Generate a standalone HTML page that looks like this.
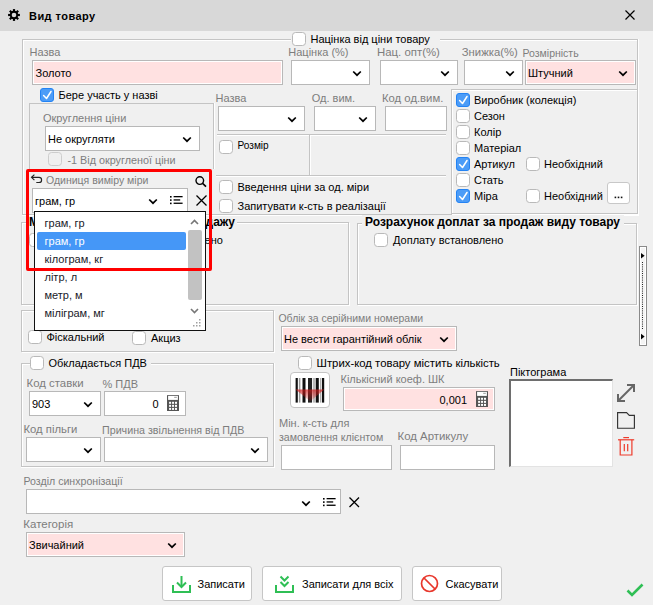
<!DOCTYPE html><html><head><meta charset="utf-8"><style>
html,body{margin:0;padding:0}
body{width:653px;height:605px;position:relative;overflow:hidden;background:#f0f0f0;font-family:"Liberation Sans",sans-serif;font-size:11px}
.t{position:absolute;white-space:nowrap}
svg{overflow:visible}
</style></head><body>
<div style="position:absolute;left:0px;top:0px;width:653px;height:31px;background:#d8d8d8"></div>
<svg style="position:absolute;left:8px;top:9px" width="12" height="12" viewBox="0 0 12 12"><g fill="#000"><circle cx="6" cy="6" r="4.2"/><rect x="4.9" y="0.1" width="2.2" height="11.8" transform="rotate(0 6 6)"/><rect x="4.9" y="0.1" width="2.2" height="11.8" transform="rotate(45 6 6)"/><rect x="4.9" y="0.1" width="2.2" height="11.8" transform="rotate(90 6 6)"/><rect x="4.9" y="0.1" width="2.2" height="11.8" transform="rotate(135 6 6)"/></g><circle cx="6" cy="6" r="2.3" fill="#d9d9d9"/></svg>
<div class="t" style="left:29px;top:10.69px;font-size:11px;line-height:11px;color:#000;font-weight:bold;letter-spacing:0.45px">Вид товару</div>
<svg style="position:absolute;left:625px;top:10px" width="10" height="10" viewBox="0 0 10 10"><path d="M0.5 0.5 L9.5 9.5 M9.5 0.5 L0.5 9.5" stroke="#000" stroke-width="1.2" fill="none"/></svg>
<div style="position:absolute;left:22px;top:39px;width:269px;height:1px;background:#c4c4c4"></div>
<div style="position:absolute;left:22px;top:40px;width:269px;height:1px;background:#fff"></div>
<div style="position:absolute;left:440px;top:39px;width:198px;height:1px;background:#c4c4c4"></div>
<div style="position:absolute;left:440px;top:40px;width:198px;height:1px;background:#fff"></div>
<div style="position:absolute;left:22px;top:39px;width:1px;height:176px;background:#c4c4c4"></div>
<div style="position:absolute;left:23px;top:40px;width:1px;height:175px;background:#fff"></div>
<div style="position:absolute;left:637px;top:39px;width:1px;height:176px;background:#c4c4c4"></div>
<div style="position:absolute;left:638px;top:39px;width:1px;height:176px;background:#fff"></div>
<div style="position:absolute;left:22px;top:214px;width:616px;height:1px;background:#c4c4c4"></div>
<div style="position:absolute;left:22px;top:215px;width:617px;height:1px;background:#fff"></div>
<div style="position:absolute;left:292px;top:32px;width:14px;height:14px;border:1.5px solid #b9b9b9;border-radius:3.5px;background:#fff;box-sizing:border-box"></div>
<div class="t" style="left:310.5px;top:33.69px;font-size:11px;line-height:11px;color:#000;font-weight:normal;">Націнка від ціни товару</div>
<div class="t" style="left:29.5px;top:46.69px;font-size:11px;line-height:11px;color:#7d7d7d;font-weight:normal;">Назва</div>
<div style="position:absolute;left:32px;top:60px;width:251px;height:25px;background:#ffe1e1;border:1px solid #b8b8b8;box-shadow:inset 0 0 0 1px #fff;box-sizing:border-box"></div>
<div class="t" style="left:35.5px;top:67.69px;font-size:11px;line-height:11px;color:#000;font-weight:normal;">Золото</div>
<div class="t" style="left:288.3px;top:47.49px;font-size:11px;line-height:11px;color:#7d7d7d;font-weight:normal;">Націнка (%)</div>
<div style="position:absolute;left:291px;top:60px;width:79px;height:25px;background:#fff;border:1px solid #b8b8b8;box-shadow:inset 0 0 0 1px #fff;box-sizing:border-box"></div>
<svg style="position:absolute;left:352px;top:70px" width="10" height="7" viewBox="0 0 10 7"><path d="M1.2 1.5 L5 5.2 L8.8 1.5" fill="none" stroke="#000" stroke-width="1.7"/></svg>
<div class="t" style="left:377px;top:47.15px;font-size:11.4px;line-height:11.4px;color:#7d7d7d;font-weight:normal;">Нац. опт(%)</div>
<div style="position:absolute;left:380px;top:60px;width:78px;height:25px;background:#fff;border:1px solid #b8b8b8;box-shadow:inset 0 0 0 1px #fff;box-sizing:border-box"></div>
<svg style="position:absolute;left:440px;top:70px" width="10" height="7" viewBox="0 0 10 7"><path d="M1.2 1.5 L5 5.2 L8.8 1.5" fill="none" stroke="#000" stroke-width="1.7"/></svg>
<div class="t" style="left:461.8px;top:47.23px;font-size:11.3px;line-height:11.3px;color:#7d7d7d;font-weight:normal;">Знижка(%)</div>
<div style="position:absolute;left:464px;top:60px;width:59px;height:25px;background:#fff;border:1px solid #b8b8b8;box-shadow:inset 0 0 0 1px #fff;box-sizing:border-box"></div>
<svg style="position:absolute;left:505px;top:70px" width="10" height="7" viewBox="0 0 10 7"><path d="M1.2 1.5 L5 5.2 L8.8 1.5" fill="none" stroke="#000" stroke-width="1.7"/></svg>
<div class="t" style="left:522.5px;top:47.91px;font-size:10.5px;line-height:10.5px;color:#7d7d7d;font-weight:normal;">Розмірність</div>
<div style="position:absolute;left:525px;top:60px;width:111px;height:25px;background:#ffe1e1;border:1px solid #b8b8b8;box-shadow:inset 0 0 0 1px #fff;box-sizing:border-box"></div>
<svg style="position:absolute;left:618px;top:70px" width="10" height="7" viewBox="0 0 10 7"><path d="M1.2 1.5 L5 5.2 L8.8 1.5" fill="none" stroke="#000" stroke-width="1.7"/></svg>
<div class="t" style="left:528px;top:68.09px;font-size:11px;line-height:11px;color:#000;font-weight:normal;">Штучний</div>
<div style="position:absolute;left:40px;top:88px;width:14px;height:14px;background:#4c9cf7;border:1px solid #2383f4;box-sizing:border-box;border-radius:3px"><svg width="14" height="14" viewBox="0 0 14 14" style="position:absolute;left:-1px;top:-1px"><path d="M3.6 7.5 L6.5 10.5 L11 3.5" fill="none" stroke="#fff" stroke-width="1.5" stroke-linecap="round" stroke-linejoin="round"/></svg></div>
<div class="t" style="left:58.5px;top:89.99px;font-size:11px;line-height:11px;color:#000;font-weight:normal;">Бере участь у назві</div>
<div style="position:absolute;left:29px;top:103px;width:1px;height:66px;background:#c4c4c4"></div>
<div style="position:absolute;left:29px;top:103px;width:185px;height:1px;background:#c4c4c4"></div>
<div style="position:absolute;left:213px;top:103px;width:1px;height:66px;background:#c4c4c4"></div>
<div style="position:absolute;left:214px;top:103px;width:1px;height:66px;background:#fff"></div>
<div class="t" style="left:43px;top:112.69px;font-size:11px;line-height:11px;color:#7d7d7d;font-weight:normal;">Округлення ціни</div>
<div style="position:absolute;left:45px;top:126px;width:155px;height:25px;background:#fff;border:1px solid #b8b8b8;box-shadow:inset 0 0 0 1px #fff;box-sizing:border-box"></div>
<svg style="position:absolute;left:182px;top:136px" width="10" height="7" viewBox="0 0 10 7"><path d="M1.2 1.5 L5 5.2 L8.8 1.5" fill="none" stroke="#000" stroke-width="1.7"/></svg>
<div class="t" style="left:48px;top:134.09px;font-size:11px;line-height:11px;color:#000;font-weight:normal;">Не округляти</div>
<div style="position:absolute;left:48px;top:152px;width:14px;height:14px;border:1.5px solid #cdcdcd;border-radius:3.5px;background:#f0f0f0;box-sizing:border-box"></div>
<div class="t" style="left:67.5px;top:154.86px;font-size:10.8px;line-height:10.8px;color:#7d7d7d;font-weight:normal;">-1 Від округленої ціни</div>
<div class="t" style="left:215.5px;top:92.99px;font-size:11px;line-height:11px;color:#7d7d7d;font-weight:normal;">Назва</div>
<div style="position:absolute;left:218px;top:106px;width:87px;height:25px;background:#fff;border:1px solid #b8b8b8;box-shadow:inset 0 0 0 1px #fff;box-sizing:border-box"></div>
<svg style="position:absolute;left:287px;top:116px" width="10" height="7" viewBox="0 0 10 7"><path d="M1.2 1.5 L5 5.2 L8.8 1.5" fill="none" stroke="#000" stroke-width="1.7"/></svg>
<div class="t" style="left:311.7px;top:92.99px;font-size:11px;line-height:11px;color:#7d7d7d;font-weight:normal;">Од. вим.</div>
<div style="position:absolute;left:314px;top:106px;width:62px;height:25px;background:#fff;border:1px solid #b8b8b8;box-shadow:inset 0 0 0 1px #fff;box-sizing:border-box"></div>
<svg style="position:absolute;left:358px;top:116px" width="10" height="7" viewBox="0 0 10 7"><path d="M1.2 1.5 L5 5.2 L8.8 1.5" fill="none" stroke="#000" stroke-width="1.7"/></svg>
<div class="t" style="left:382px;top:92.73px;font-size:11.3px;line-height:11.3px;color:#7d7d7d;font-weight:normal;">Код од.вим.</div>
<div style="position:absolute;left:385px;top:106px;width:62px;height:25px;background:#fff;border:1px solid #b8b8b8;box-shadow:inset 0 0 0 1px #fff;box-sizing:border-box"></div>
<div style="position:absolute;left:217px;top:134px;width:229px;height:1px;background:#c4c4c4"></div>
<div style="position:absolute;left:217px;top:135px;width:229px;height:1px;background:#fff"></div>
<div style="position:absolute;left:309px;top:135px;width:1px;height:40px;background:#c4c4c4"></div>
<div style="position:absolute;left:310px;top:135px;width:1px;height:40px;background:#fff"></div>
<div style="position:absolute;left:216px;top:175px;width:230px;height:1px;background:#c4c4c4"></div>
<div style="position:absolute;left:216px;top:176px;width:230px;height:1px;background:#fff"></div>
<div style="position:absolute;left:219px;top:140px;width:14px;height:14px;border:1.5px solid #b9b9b9;border-radius:3.5px;background:#fff;box-sizing:border-box"></div>
<div class="t" style="left:237.5px;top:141.45px;font-size:10.1px;line-height:10.1px;color:#000;font-weight:normal;">Розмір</div>
<div style="position:absolute;left:219px;top:180px;width:14px;height:14px;border:1.5px solid #b9b9b9;border-radius:3.5px;background:#fff;box-sizing:border-box"></div>
<div class="t" style="left:237.5px;top:181.69px;font-size:11px;line-height:11px;color:#000;font-weight:normal;">Введення ціни за од. міри</div>
<div style="position:absolute;left:219px;top:199px;width:14px;height:14px;border:1.5px solid #b9b9b9;border-radius:3.5px;background:#fff;box-sizing:border-box"></div>
<div class="t" style="left:237.5px;top:200.69px;font-size:11px;line-height:11px;color:#000;font-weight:normal;">Запитувати к-сть в реалізації</div>
<div style="position:absolute;left:451px;top:89px;width:187px;height:125px;border:1px solid #c4c4c4;box-shadow:inset 1px 1px 0 #fff, 1px 1px 0 #fff;box-sizing:border-box"></div>
<div style="position:absolute;left:456px;top:93px;width:14px;height:14px;background:#4c9cf7;border:1px solid #2383f4;box-sizing:border-box;border-radius:3px"><svg width="14" height="14" viewBox="0 0 14 14" style="position:absolute;left:-1px;top:-1px"><path d="M3.6 7.5 L6.5 10.5 L11 3.5" fill="none" stroke="#fff" stroke-width="1.5" stroke-linecap="round" stroke-linejoin="round"/></svg></div>
<div class="t" style="left:474px;top:94.69px;font-size:11px;line-height:11px;color:#000;font-weight:normal;">Виробник (колекція)</div>
<div style="position:absolute;left:456px;top:109px;width:14px;height:14px;border:1.5px solid #b9b9b9;border-radius:3.5px;background:#fff;box-sizing:border-box"></div>
<div class="t" style="left:474px;top:110.69px;font-size:11px;line-height:11px;color:#000;font-weight:normal;">Сезон</div>
<div style="position:absolute;left:456px;top:125px;width:14px;height:14px;border:1.5px solid #b9b9b9;border-radius:3.5px;background:#fff;box-sizing:border-box"></div>
<div class="t" style="left:474px;top:126.69px;font-size:11px;line-height:11px;color:#000;font-weight:normal;">Колір</div>
<div style="position:absolute;left:456px;top:141px;width:14px;height:14px;border:1.5px solid #b9b9b9;border-radius:3.5px;background:#fff;box-sizing:border-box"></div>
<div class="t" style="left:474px;top:142.69px;font-size:11px;line-height:11px;color:#000;font-weight:normal;">Матеріал</div>
<div style="position:absolute;left:456px;top:157px;width:14px;height:14px;background:#4c9cf7;border:1px solid #2383f4;box-sizing:border-box;border-radius:3px"><svg width="14" height="14" viewBox="0 0 14 14" style="position:absolute;left:-1px;top:-1px"><path d="M3.6 7.5 L6.5 10.5 L11 3.5" fill="none" stroke="#fff" stroke-width="1.5" stroke-linecap="round" stroke-linejoin="round"/></svg></div>
<div class="t" style="left:474px;top:158.69px;font-size:11px;line-height:11px;color:#000;font-weight:normal;">Артикул</div>
<div style="position:absolute;left:456px;top:173px;width:14px;height:14px;border:1.5px solid #b9b9b9;border-radius:3.5px;background:#fff;box-sizing:border-box"></div>
<div class="t" style="left:474px;top:174.69px;font-size:11px;line-height:11px;color:#000;font-weight:normal;">Стать</div>
<div style="position:absolute;left:456px;top:189px;width:14px;height:14px;background:#4c9cf7;border:1px solid #2383f4;box-sizing:border-box;border-radius:3px"><svg width="14" height="14" viewBox="0 0 14 14" style="position:absolute;left:-1px;top:-1px"><path d="M3.6 7.5 L6.5 10.5 L11 3.5" fill="none" stroke="#fff" stroke-width="1.5" stroke-linecap="round" stroke-linejoin="round"/></svg></div>
<div class="t" style="left:474px;top:190.69px;font-size:11px;line-height:11px;color:#000;font-weight:normal;">Міра</div>
<div style="position:absolute;left:526px;top:157px;width:14px;height:14px;border:1.5px solid #b9b9b9;border-radius:3.5px;background:#fff;box-sizing:border-box"></div>
<div class="t" style="left:544px;top:158.69px;font-size:11px;line-height:11px;color:#000;font-weight:normal;">Необхідний</div>
<div style="position:absolute;left:526px;top:189px;width:14px;height:14px;border:1.5px solid #b9b9b9;border-radius:3.5px;background:#fff;box-sizing:border-box"></div>
<div class="t" style="left:544px;top:190.69px;font-size:11px;line-height:11px;color:#000;font-weight:normal;">Необхідний</div>
<div style="position:absolute;left:607px;top:182px;width:23px;height:22px;background:#fff;border:1px solid #c8c8c8;border-radius:3px;box-sizing:border-box"></div>
<svg style="position:absolute;left:614px;top:196px" width="10" height="3"><rect x="0.6" y="0.6" width="1.6" height="1.6" fill="#111"/><rect x="3.7" y="0.6" width="1.6" height="1.6" fill="#111"/><rect x="6.8" y="0.6" width="1.6" height="1.6" fill="#111"/></svg>
<div style="position:absolute;left:21px;top:222px;width:328px;height:83px;border:1px solid #c4c4c4;box-shadow:inset 1px 1px 0 #fff, 1px 1px 0 #fff;box-sizing:border-box"></div>
<div style="position:absolute;left:26px;top:216px;width:211px;height:13px;background:#f0f0f0"></div>
<div class="t" style="left:29px;top:216.04px;font-size:12px;line-height:12px;color:#000;font-weight:bold;">Максимальна знижка при продажу</div>
<div style="position:absolute;left:29px;top:233px;width:14px;height:14px;border:1.5px solid #b9b9b9;border-radius:3.5px;background:#fff;box-sizing:border-box"></div>
<div class="t" style="left:47.5px;top:235.19px;font-size:11px;line-height:11px;color:#000;font-weight:normal;">Максимальну знижку встановлено</div>
<div style="position:absolute;left:357px;top:223px;width:280px;height:82px;border:1px solid #c4c4c4;box-shadow:inset 1px 1px 0 #fff, 1px 1px 0 #fff;box-sizing:border-box"></div>
<div style="position:absolute;left:362px;top:215px;width:262px;height:14px;background:#f0f0f0"></div>
<div class="t" style="left:365px;top:216.04px;font-size:12px;line-height:12px;color:#000;font-weight:bold;">Розрахунок доплат за продаж виду товару</div>
<div style="position:absolute;left:374px;top:233px;width:14px;height:14px;border:1.5px solid #b9b9b9;border-radius:3.5px;background:#fff;box-sizing:border-box"></div>
<div class="t" style="left:393px;top:235.19px;font-size:11px;line-height:11px;color:#000;font-weight:normal;">Доплату встановлено</div>
<div style="position:absolute;left:639px;top:246px;width:8px;height:100px;background:#f4f4f4;border:1px solid #8a8a8a;box-shadow:inset 0 0 0 1px #fff;box-sizing:border-box"></div>
<svg style="position:absolute;left:641px;top:252.5px" width="4" height="87"><path d="M0 0 L3.6 2.8 L0 5.6z" fill="#000"/><path d="M0 80.8 L3.6 83.6 L0 86.4z" fill="#000"/><line x1="1.5" y1="9" x2="1.5" y2="76.5" stroke="#222" stroke-width="1" stroke-dasharray="1 1.2"/></svg>
<div style="position:absolute;left:21px;top:310px;width:253px;height:42px;border:1px solid #c4c4c4;box-shadow:inset 1px 1px 0 #fff, 1px 1px 0 #fff;box-sizing:border-box"></div>
<div style="position:absolute;left:28px;top:330px;width:14px;height:14px;border:1.5px solid #b9b9b9;border-radius:3.5px;background:#fff;box-sizing:border-box"></div>
<div class="t" style="left:46.5px;top:331.69px;font-size:11px;line-height:11px;color:#000;font-weight:normal;">Фіскальний</div>
<div style="position:absolute;left:132px;top:331px;width:14px;height:14px;border:1.5px solid #b9b9b9;border-radius:3.5px;background:#fff;box-sizing:border-box"></div>
<div class="t" style="left:151px;top:332.69px;font-size:11px;line-height:11px;color:#000;font-weight:normal;">Акциз</div>
<div class="t" style="left:278.5px;top:313.95px;font-size:10.45px;line-height:10.45px;color:#7d7d7d;font-weight:normal;">Облік за серійними номерами</div>
<div style="position:absolute;left:281px;top:326px;width:176px;height:25px;background:#ffe1e1;border:1px solid #b8b8b8;box-shadow:inset 0 0 0 1px #fff;box-sizing:border-box"></div>
<svg style="position:absolute;left:439px;top:336px" width="10" height="7" viewBox="0 0 10 7"><path d="M1.2 1.5 L5 5.2 L8.8 1.5" fill="none" stroke="#000" stroke-width="1.7"/></svg>
<div class="t" style="left:284px;top:334.09px;font-size:11px;line-height:11px;color:#000;font-weight:normal;">Не вести гарантійний облік</div>
<div style="position:absolute;left:21px;top:363px;width:9px;height:1px;background:#c4c4c4"></div>
<div style="position:absolute;left:151px;top:363px;width:123px;height:1px;background:#c4c4c4"></div>
<div style="position:absolute;left:21px;top:363px;width:1px;height:104px;background:#c4c4c4"></div>
<div style="position:absolute;left:273px;top:363px;width:1px;height:104px;background:#c4c4c4"></div>
<div style="position:absolute;left:21px;top:466px;width:253px;height:1px;background:#c4c4c4"></div>
<div style="position:absolute;left:22px;top:364px;width:8px;height:1px;background:#fff"></div>
<div style="position:absolute;left:151px;top:364px;width:122px;height:1px;background:#fff"></div>
<div style="position:absolute;left:22px;top:364px;width:1px;height:102px;background:#fff"></div>
<div style="position:absolute;left:274px;top:363px;width:1px;height:104px;background:#fff"></div>
<div style="position:absolute;left:21px;top:467px;width:254px;height:1px;background:#fff"></div>
<div style="position:absolute;left:30px;top:356px;width:14px;height:14px;border:1.5px solid #b9b9b9;border-radius:3.5px;background:#fff;box-sizing:border-box"></div>
<div class="t" style="left:48.5px;top:357.99px;font-size:11px;line-height:11px;color:#000;font-weight:normal;">Обкладається ПДВ</div>
<div class="t" style="left:26.5px;top:378.35px;font-size:11.4px;line-height:11.4px;color:#7d7d7d;font-weight:normal;">Код ставки</div>
<div class="t" style="left:102.5px;top:378.69px;font-size:11px;line-height:11px;color:#7d7d7d;font-weight:normal;">% ПДВ</div>
<div style="position:absolute;left:29px;top:391px;width:72px;height:25px;background:#fff;border:1px solid #b8b8b8;box-shadow:inset 0 0 0 1px #fff;box-sizing:border-box"></div>
<svg style="position:absolute;left:83px;top:401px" width="10" height="7" viewBox="0 0 10 7"><path d="M1.2 1.5 L5 5.2 L8.8 1.5" fill="none" stroke="#000" stroke-width="1.7"/></svg>
<div class="t" style="left:32px;top:399.09px;font-size:11px;line-height:11px;color:#000;font-weight:normal;">903</div>
<div style="position:absolute;left:104px;top:391px;width:82px;height:25px;background:#fff;border:1px solid #b8b8b8;box-shadow:inset 0 0 0 1px #fff;box-sizing:border-box"></div>
<div class="t" style="left:152.5px;top:398.69px;font-size:11px;line-height:11px;color:#000;font-weight:normal;">0</div>
<svg style="position:absolute;left:167px;top:395px" width="12" height="16" viewBox="0 0 12 16"><rect x="0" y="0" width="12" height="16" rx="0.6" fill="#555"/><rect x="1.1" y="0.8" width="9.8" height="4.1" fill="#fff"/><rect x="7.2" y="1.8" width="2.6" height="1" fill="#999"/><rect x="2.1" y="6.8" width="2" height="2" fill="#fff"/><rect x="2.1" y="9.85" width="2" height="2" fill="#fff"/><rect x="2.1" y="12.899999999999999" width="2" height="2" fill="#fff"/><rect x="5.050000000000001" y="6.8" width="2" height="2" fill="#fff"/><rect x="5.050000000000001" y="9.85" width="2" height="2" fill="#fff"/><rect x="5.050000000000001" y="12.899999999999999" width="2" height="2" fill="#fff"/><rect x="8.0" y="6.8" width="2" height="2" fill="#fff"/><rect x="8.0" y="9.85" width="2" height="2" fill="#fff"/><rect x="8.0" y="12.899999999999999" width="2" height="2" fill="#fff"/></svg>
<div class="t" style="left:23.5px;top:423.93px;font-size:11.3px;line-height:11.3px;color:#7d7d7d;font-weight:normal;">Код пільги</div>
<div class="t" style="left:102px;top:424.74px;font-size:10.7px;line-height:10.7px;color:#7d7d7d;font-weight:normal;">Причина звільнення від ПДВ</div>
<div style="position:absolute;left:26px;top:437px;width:75px;height:25px;background:#fff;border:1px solid #b8b8b8;box-shadow:inset 0 0 0 1px #fff;box-sizing:border-box"></div>
<svg style="position:absolute;left:83px;top:447px" width="10" height="7" viewBox="0 0 10 7"><path d="M1.2 1.5 L5 5.2 L8.8 1.5" fill="none" stroke="#000" stroke-width="1.7"/></svg>
<div style="position:absolute;left:104px;top:437px;width:164px;height:25px;background:#fff;border:1px solid #b8b8b8;box-shadow:inset 0 0 0 1px #fff;box-sizing:border-box"></div>
<svg style="position:absolute;left:250px;top:447px" width="10" height="7" viewBox="0 0 10 7"><path d="M1.2 1.5 L5 5.2 L8.8 1.5" fill="none" stroke="#000" stroke-width="1.7"/></svg>
<div style="position:absolute;left:298px;top:356px;width:14px;height:14px;border:1.5px solid #b9b9b9;border-radius:3.5px;background:#fff;box-sizing:border-box"></div>
<div class="t" style="left:316.5px;top:358.39px;font-size:11.35px;line-height:11.35px;color:#000;font-weight:normal;">Штрих-код товару містить кількість</div>
<div style="position:absolute;left:290px;top:372px;width:40px;height:36px;background:#fff;border:1.5px solid #c4c4c4;border-radius:4px;box-sizing:border-box"></div>
<svg style="position:absolute;left:295px;top:377.5px" width="30" height="25" viewBox="0 0 30 25"><defs><linearGradient id="rg" x1="0" y1="0" x2="0" y2="1"><stop offset="0" stop-color="#d01818" stop-opacity="0.7"/><stop offset="1" stop-color="#d01818" stop-opacity="0.1"/></linearGradient></defs><rect x="0.6" y="0" width="2.2" height="24.6" fill="#111"/><rect x="3.9" y="0" width="1.5" height="24.6" fill="#999"/><rect x="7.5" y="0" width="3" height="24.6" fill="#111"/><rect x="13" y="0" width="4" height="24.6" fill="#222"/><rect x="17.8" y="0" width="2.6" height="24.6" fill="#bbb"/><rect x="20.8" y="0" width="3" height="24.6" fill="#111"/><rect x="25.2" y="0" width="1.1" height="24.6" fill="#999"/><rect x="27" y="0" width="2.2" height="24.6" fill="#111"/><path d="M0.6 11.5 L29.2 11.5 L15.3 23.5z" fill="url(#rg)"/></svg>
<div class="t" style="left:340.5px;top:373.69px;font-size:11px;line-height:11px;color:#7d7d7d;font-weight:normal;">Кількісний коеф. ШК</div>
<div style="position:absolute;left:343px;top:387px;width:152px;height:24px;background:#ffe1e1;border:1px solid #b8b8b8;box-shadow:inset 0 0 0 1px #fff;box-sizing:border-box"></div>
<div class="t" style="left:439.5px;top:394.69px;font-size:11px;line-height:11px;color:#000;font-weight:normal;">0,001</div>
<svg style="position:absolute;left:476px;top:391px" width="12" height="16" viewBox="0 0 12 16"><rect x="0" y="0" width="12" height="16" rx="0.6" fill="#555"/><rect x="1.1" y="0.8" width="9.8" height="4.1" fill="#fff"/><rect x="7.2" y="1.8" width="2.6" height="1" fill="#999"/><rect x="2.1" y="6.8" width="2" height="2" fill="#fff"/><rect x="2.1" y="9.85" width="2" height="2" fill="#fff"/><rect x="2.1" y="12.899999999999999" width="2" height="2" fill="#fff"/><rect x="5.050000000000001" y="6.8" width="2" height="2" fill="#fff"/><rect x="5.050000000000001" y="9.85" width="2" height="2" fill="#fff"/><rect x="5.050000000000001" y="12.899999999999999" width="2" height="2" fill="#fff"/><rect x="8.0" y="6.8" width="2" height="2" fill="#fff"/><rect x="8.0" y="9.85" width="2" height="2" fill="#fff"/><rect x="8.0" y="12.899999999999999" width="2" height="2" fill="#fff"/></svg>
<div class="t" style="left:279px;top:418.19px;font-size:11px;line-height:11px;color:#7d7d7d;font-weight:normal;">Мін. к-сть для</div>
<div class="t" style="left:279px;top:431.53px;font-size:10.6px;line-height:10.6px;color:#7d7d7d;font-weight:normal;">замовлення клієнтом</div>
<div style="position:absolute;left:281px;top:445px;width:111px;height:25px;background:#fff;border:1px solid #b8b8b8;box-shadow:inset 0 0 0 1px #fff;box-sizing:border-box"></div>
<div class="t" style="left:397.5px;top:431.35px;font-size:11.4px;line-height:11.4px;color:#7d7d7d;font-weight:normal;">Код Артикулу</div>
<div style="position:absolute;left:400px;top:445px;width:95px;height:25px;background:#fff;border:1px solid #b8b8b8;box-shadow:inset 0 0 0 1px #fff;box-sizing:border-box"></div>
<div class="t" style="left:510px;top:366.69px;font-size:11px;line-height:11px;color:#000;font-weight:normal;">Піктограма</div>
<div style="position:absolute;left:509px;top:379px;width:104px;height:88px;background:#fff;border-top:2px solid #6e6e6e;border-left:2px solid #6e6e6e;border-right:1px solid #e3e3e3;border-bottom:1px solid #e3e3e3;box-sizing:border-box"></div>
<svg style="position:absolute;left:616px;top:383px" width="20" height="20" viewBox="0 0 20 20"><g stroke="#666" stroke-width="2" fill="none"><path d="M2 18 L18 2"/><path d="M11 2 L18 2 L18 9"/><path d="M2 11 L2 18 L9 18"/></g></svg>
<svg style="position:absolute;left:617px;top:411.5px" width="18" height="17" viewBox="0 0 18 17"><path d="M0.6 0.6 L9.6 0.6 L12.3 3.3 L17.4 3.3 L17.4 16.2 L0.6 16.2 Z" fill="none" stroke="#333" stroke-width="1.15"/></svg>
<svg style="position:absolute;left:618px;top:436.5px" width="17" height="19" viewBox="0 0 17 19"><g stroke="#ee3b2b" stroke-width="1.2" fill="none"><path d="M0 2.8 L16.2 2.8"/><path d="M5.3 0.6 L11 0.6"/><path d="M2.2 2.8 L2.2 18 L13.9 18 L13.9 2.8"/><path d="M6.3 7 L6.3 14.2 M9.7 7 L9.7 14.2"/></g></svg>
<div class="t" style="left:23.5px;top:475.83px;font-size:10.6px;line-height:10.6px;color:#7d7d7d;font-weight:normal;">Розділ синхронізації</div>
<div style="position:absolute;left:26px;top:489px;width:315px;height:25px;background:#fff;border:1px solid #b8b8b8;box-shadow:inset 0 0 0 1px #fff;box-sizing:border-box"></div>
<svg style="position:absolute;left:300.7px;top:499.6px" width="10" height="7" viewBox="0 0 10 7"><path d="M1.2 1.5 L5 5.2 L8.8 1.5" fill="none" stroke="#000" stroke-width="1.7"/></svg>
<svg style="position:absolute;left:322.5px;top:497.5px" width="13" height="9" viewBox="0 0 13 9"><rect x="0" y="0" width="1.6" height="1.6" fill="#000"/><rect x="0" y="3.3" width="1.6" height="1.6" fill="#000"/><rect x="0" y="6.6" width="1.6" height="1.6" fill="#000"/><rect x="3.6" y="0" width="9" height="1.3" fill="#000"/><rect x="3.6" y="3.3" width="6.6" height="1.3" fill="#000"/><rect x="3.6" y="6.6" width="9" height="1.3" fill="#000"/></svg>
<svg style="position:absolute;left:348.5px;top:497px" width="10.5" height="10.5" viewBox="0 0 10.5 10.5"><path d="M0.5 0.5 L10.0 10.0 M10.0 0.5 L0.5 10.0" stroke="#000" stroke-width="1.3" fill="none"/></svg>
<div class="t" style="left:23.3px;top:518.77px;font-size:11.5px;line-height:11.5px;color:#7d7d7d;font-weight:normal;">Категорія</div>
<div style="position:absolute;left:26px;top:532px;width:159px;height:25px;background:#ffe1e1;border:1px solid #b8b8b8;box-shadow:inset 0 0 0 1px #fff;box-sizing:border-box"></div>
<svg style="position:absolute;left:167px;top:542px" width="10" height="7" viewBox="0 0 10 7"><path d="M1.2 1.5 L5 5.2 L8.8 1.5" fill="none" stroke="#000" stroke-width="1.7"/></svg>
<div class="t" style="left:29px;top:540.09px;font-size:11px;line-height:11px;color:#000;font-weight:normal;">Звичайний</div>
<div style="position:absolute;left:162px;top:566px;width:90px;height:35px;background:#fff;border:1px solid #c6c6c6;border-radius:3px;box-sizing:border-box"></div>
<div style="position:absolute;left:262px;top:566px;width:140px;height:35px;background:#fff;border:1px solid #c6c6c6;border-radius:3px;box-sizing:border-box"></div>
<div style="position:absolute;left:412px;top:566px;width:90px;height:35px;background:#fff;border:1px solid #c6c6c6;border-radius:3px;box-sizing:border-box"></div>
<svg style="position:absolute;left:172px;top:575px" width="19" height="18" viewBox="0 0 19 18"><g stroke="#2fbf55" stroke-width="2" fill="none"><path d="M1 10 L1 17 L18 17 L18 10"/><path d="M9.5 1 L9.5 12"/><path d="M5 7.5 L9.5 12 L14 7.5"/></g></svg>
<div class="t" style="left:197.5px;top:579.19px;font-size:11px;line-height:11px;color:#000;font-weight:normal;">Записати</div>
<svg style="position:absolute;left:275px;top:575px" width="19" height="18" viewBox="0 0 19 18"><g stroke="#2fbf55" stroke-width="2" fill="none"><path d="M1 10 L1 17 L18 17 L18 10"/><path d="M5.5 1.5 L9.5 5.5 L13.5 1.5"/><path d="M5.5 7 L9.5 11 L13.5 7"/></g></svg>
<div class="t" style="left:302px;top:579.19px;font-size:11px;line-height:11px;color:#000;font-weight:normal;">Записати для всіх</div>
<svg style="position:absolute;left:420px;top:574px" width="19" height="19" viewBox="0 0 19 19"><g stroke="#e8372c" stroke-width="1.7" fill="none"><circle cx="9.5" cy="9.5" r="8"/><path d="M4 4 L15 15"/></g></svg>
<div class="t" style="left:445.5px;top:579.19px;font-size:11px;line-height:11px;color:#000;font-weight:normal;">Скасувати</div>
<svg style="position:absolute;left:626px;top:583px" width="18" height="14" viewBox="0 0 18 14"><path d="M1.5 7.5 L6 12 L16.5 1.5" fill="none" stroke="#2fbf55" stroke-width="2.6"/></svg>
<svg style="position:absolute;left:30px;top:173px" width="13" height="11" viewBox="0 0 13 11"><path d="M4.4 1.6 L1.5 4.3 L4.4 7.1 M1.5 4.3 L9 4.3 Q11.6 4.3 11.6 6.9 Q11.6 9.5 9 9.5 L6.3 9.5" fill="none" stroke="#222" stroke-width="1.15"/></svg>
<div class="t" style="left:46px;top:175.11px;font-size:10.5px;line-height:10.5px;color:#7d7d7d;font-weight:normal;">Одиниця виміру міри</div>
<svg style="position:absolute;left:195px;top:176px" width="12" height="11" viewBox="0 0 12 11"><circle cx="4.8" cy="4.6" r="3.8" fill="none" stroke="#000" stroke-width="1.4"/><path d="M7.6 7.4 L11 10.6" stroke="#000" stroke-width="1.6"/></svg>
<div style="position:absolute;left:32px;top:188px;width:156px;height:25px;background:#fff;border:1px solid #b8b8b8;box-shadow:inset 0 0 0 1px #fff;box-sizing:border-box"></div>
<div class="t" style="left:35px;top:195.69px;font-size:11px;line-height:11px;color:#000;font-weight:normal;">грам, гр</div>
<svg style="position:absolute;left:148px;top:198px" width="10" height="7" viewBox="0 0 10 7"><path d="M1.2 1.5 L5 5.2 L8.8 1.5" fill="none" stroke="#000" stroke-width="1.7"/></svg>
<svg style="position:absolute;left:169.5px;top:196px" width="13" height="9" viewBox="0 0 13 9"><rect x="0" y="0" width="1.6" height="1.6" fill="#000"/><rect x="0" y="3.3" width="1.6" height="1.6" fill="#000"/><rect x="0" y="6.6" width="1.6" height="1.6" fill="#000"/><rect x="3.6" y="0" width="9" height="1.3" fill="#000"/><rect x="3.6" y="3.3" width="6.6" height="1.3" fill="#000"/><rect x="3.6" y="6.6" width="9" height="1.3" fill="#000"/></svg>
<svg style="position:absolute;left:195.5px;top:195px" width="11" height="11" viewBox="0 0 11 11"><path d="M0.5 0.5 L10.5 10.5 M10.5 0.5 L0.5 10.5" stroke="#000" stroke-width="1.3" fill="none"/></svg>
<div style="position:absolute;left:34px;top:211px;width:172px;height:120px;background:#fff;border:1px solid #111;box-sizing:border-box"></div>
<div style="position:absolute;left:37px;top:232px;width:149px;height:18px;background:#4597f7;border-radius:2px"></div>
<div class="t" style="left:44.5px;top:217.69px;font-size:11px;line-height:11px;color:#1a1a2a;font-weight:normal;">грам, гр</div>
<div class="t" style="left:44.5px;top:235.69px;font-size:11px;line-height:11px;color:#fff;font-weight:normal;">грам, гр</div>
<div class="t" style="left:44.5px;top:253.69px;font-size:11px;line-height:11px;color:#1a1a2a;font-weight:normal;">кілограм, кг</div>
<div class="t" style="left:44.5px;top:271.69px;font-size:11px;line-height:11px;color:#1a1a2a;font-weight:normal;">літр, л</div>
<div class="t" style="left:44.5px;top:289.69px;font-size:11px;line-height:11px;color:#1a1a2a;font-weight:normal;">метр, м</div>
<div class="t" style="left:44.5px;top:307.69px;font-size:11px;line-height:11px;color:#1a1a2a;font-weight:normal;">міліграм, мг</div>
<div style="position:absolute;left:188px;top:230px;width:14px;height:70px;background:#c2c2c2;border-radius:2px"></div>
<svg style="position:absolute;left:190px;top:219px" width="9" height="6" viewBox="0 0 9 6"><path d="M1 5 L4.5 1.5 L8 5" fill="none" stroke="#777" stroke-width="1.6"/></svg>
<svg style="position:absolute;left:190px;top:308px" width="9" height="6" viewBox="0 0 9 6"><path d="M1 1 L4.5 4.5 L8 1" fill="none" stroke="#777" stroke-width="1.6"/></svg>
<svg style="position:absolute;left:192.5px;top:318.5px" width="9" height="9" viewBox="0 0 9 9"><rect x="6" y="0" width="1.5" height="1.5" fill="#a0a0a0"/><rect x="3" y="3" width="1.5" height="1.5" fill="#a0a0a0"/><rect x="6" y="3" width="1.5" height="1.5" fill="#a0a0a0"/><rect x="0" y="6" width="1.5" height="1.5" fill="#a0a0a0"/><rect x="3" y="6" width="1.5" height="1.5" fill="#a0a0a0"/><rect x="6" y="6" width="1.5" height="1.5" fill="#a0a0a0"/></svg>
<div style="position:absolute;left:26px;top:169px;width:186px;height:102px;border:3px solid #ff0000;border-radius:2px;box-sizing:border-box"></div>
</body></html>
